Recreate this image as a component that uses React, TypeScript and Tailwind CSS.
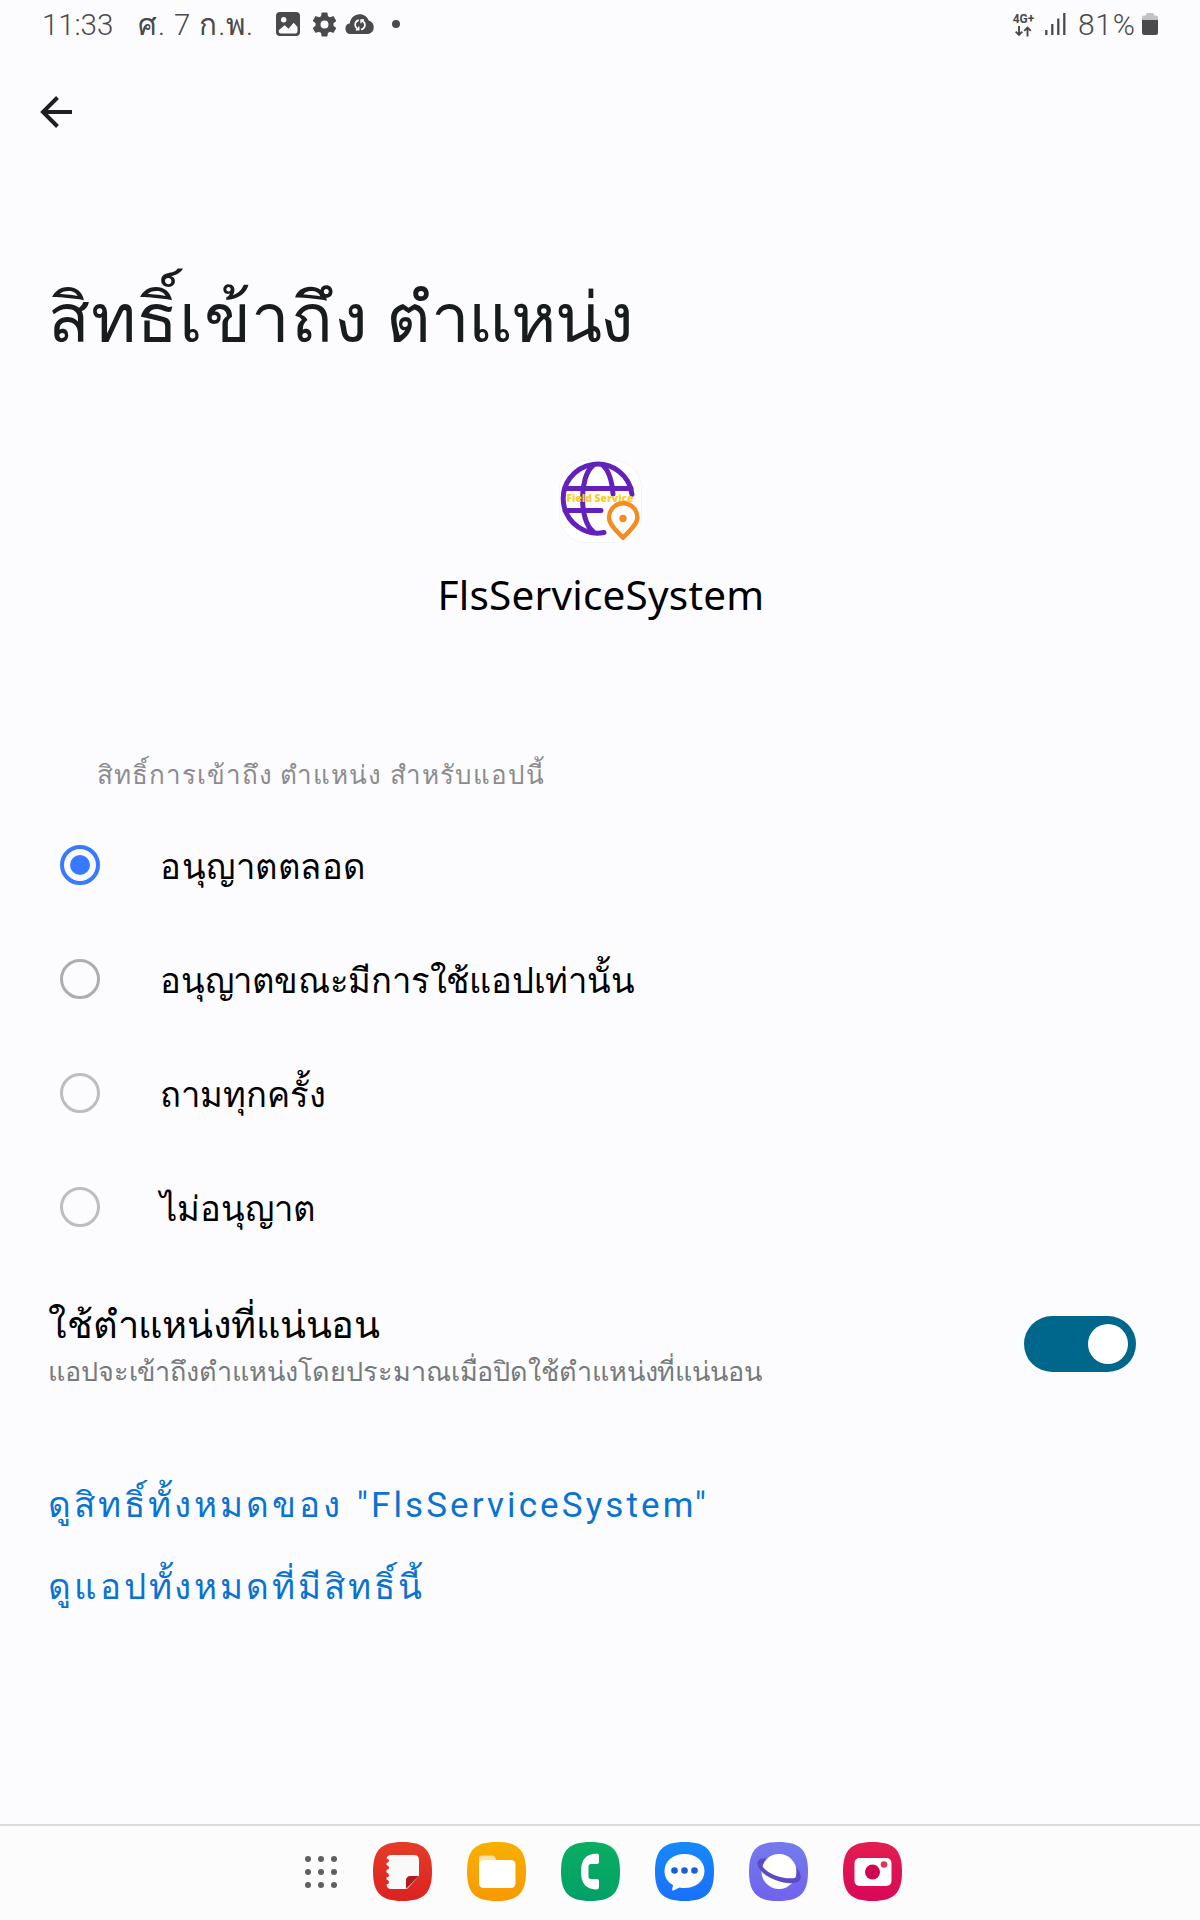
import type { ReactNode } from "react";

const options = [
  { label: "อนุญาตตลอด", ring: "border-[#387aff]", tracking: "tracking-[0.5px]", checked: true },
  { label: "อนุญาตขณะมีการใช้แอปเท่านั้น", ring: "border-[#adadb0]", tracking: "tracking-[-0.2px]", checked: false },
  { label: "ถามทุกครั้ง", ring: "border-[#bdbdc0]", tracking: "tracking-normal", checked: false },
  { label: "ไม่อนุญาต", ring: "border-[#bdbdc0]", tracking: "tracking-normal", checked: false },
];

function StatusBar() {
  return (
    <header className="flex h-[50px] shrink-0 items-center text-[#4a4a4c]">
      <span className="ml-[42px] w-24 whitespace-nowrap text-[29.5px] leading-[50px] font-[350] tracking-[-0.1px]">11:33</span>
      <span className="w-[138px] whitespace-nowrap text-[29.5px] leading-[50px] font-[350] tracking-[0.9px]">ศ. 7 ก.พ.</span>
      <svg className="-mt-0.5 h-6 w-6" viewBox="0 0 24 24">
        <rect width="24" height="24" rx="4" fill="#4a4a4c" />
        <circle cx="7.7" cy="7.7" r="2.7" fill="#fcfcfe" />
        <path d="M2.7 18.2 8.7 13.3l3.8 3.4 5.2-6 3.8 4.3v4.2q0 2.2-2.2 2.2H5Q2.7 21.4 2.7 19.2z" fill="#fcfcfe" />
      </svg>
      <svg className="-mt-0.5 ml-3 h-[25px] w-[25px]" viewBox="2 2 20 20">
        <path
          fill="#4a4a4c"
          d="M19.14 12.94c.04-.3.06-.61.06-.94 0-.32-.02-.64-.07-.94l2.03-1.58a.49.49 0 0 0 .12-.61l-1.92-3.32a.488.488 0 0 0-.59-.22l-2.39.96c-.5-.38-1.03-.7-1.62-.94l-.36-2.54a.484.484 0 0 0-.48-.41h-3.84c-.24 0-.43.17-.47.41l-.36 2.54c-.59.24-1.13.57-1.62.94l-2.39-.96c-.22-.08-.47 0-.59.22L2.74 8.87c-.12.21-.08.47.12.61l2.03 1.58c-.05.3-.09.63-.09.94s.02.64.07.94l-2.03 1.58a.49.49 0 0 0-.12.61l1.92 3.32c.12.22.37.29.59.22l2.39-.96c.5.38 1.03.7 1.62.94l.36 2.54c.05.24.24.41.48.41h3.84c.24 0 .44-.17.47-.41l.36-2.54c.59-.24 1.13-.56 1.62-.94l2.39.96c.22.08.47 0 .59-.22l1.92-3.32c.12-.22.07-.47-.12-.61zM12 15.2a3.2 3.2 0 1 1 0-6.4 3.2 3.2 0 0 1 0 6.4"
        />
      </svg>
      <svg className="-mt-0.5 ml-2 h-5 w-[30px]" viewBox="0 0 30 20">
        <path d="M5.5 20a5.4 5.4 0 0 1-.6-10.7C5.3 4.2 9.5.3 14.7.3c4.2 0 7.6 2.5 9 6.2A7 7 0 0 1 23.5 20z" fill="#4a4a4c" />
        <g fill="none" stroke="#fcfcfe" strokeWidth="1.7">
          <path d="M13.8 6.2a4.6 4.6 0 0 0-2 8l1.7 1.3M16 15.5a4.6 4.6 0 0 0 2-8.3l-1.5-1" />
          <path d="M13.8 12.5v3.3h-3M16 9.2V6h3" strokeWidth="1.4" />
        </g>
      </svg>
      <span className="-mt-0.5 ml-[17px] h-2 w-2 rounded-full bg-[#4a4a4c]" />
      <div className="ml-auto flex w-[25px] flex-col items-center">
        <span className="text-[12px] leading-[13px] font-bold whitespace-nowrap">4G+</span>
        <svg className="h-[11px] w-[17px]" viewBox="0 0 17 11">
          <path d="M4 0v9M.7 5.700 4 9l3.300-3.300M12.500 10.500V1.500M9.200 4.800l3.300-3.300 3.300 3.300" fill="none" stroke="#4a4a4c" strokeWidth="1.9" />
        </svg>
      </div>
      <svg className="-mt-0.5 ml-[9px] h-[22px] w-[21px]" viewBox="0 0 21 22">
        <path d="M1.3 17v5M7.3 11v11M13.3 5.5V22M19.3 0v22" stroke="#4a4a4c" strokeWidth="2.3" />
      </svg>
      <span className="ml-3 w-16 whitespace-nowrap text-[30px] leading-[50px] font-[350] tracking-[0.7px]">81%</span>
      <svg className="-mt-0.5 mr-[42px] h-[22px] w-4" viewBox="0 0 16 22">
        <path d="M4 2.5V1.5Q4 0 5.5 0h5Q12 0 12 1.5v1h2q2 0 2 2V7H0V4.5q0-2 2-2z" fill="#c2c2c4" />
        <path d="M0 7h16v12.5q0 2.5-2.5 2.5h-11Q0 22 0 19.5z" fill="#4a4a4c" />
      </svg>
    </header>
  );
}

function FieldServiceIcon() {
  return (
    <svg className="h-[83px] w-[83px]" viewBox="0 0 83 83">
      <rect x="0.5" y="0.5" width="82" height="82" rx="27" fill="#ffffff" stroke="#eef3f3" strokeWidth="0.8" />
      <g fill="none" stroke="#6420bd" strokeWidth="5" strokeLinecap="round">
        <path d="M73 34.5A34.5 34.5 0 1 0 45 72.5" />
        <path d="M6 28.5h66M6 50.5h36" />
        <path d="M34 5.5C20 17 20 60 34 71.5M44 5.5C50 11 53 21 54 34" />
      </g>
      <text x="7.5" y="41.7" fontFamily="'Open Sans', sans-serif" fontSize="10.7" fontWeight="800" fill="#fccb2c" textLength="67" lengthAdjust="spacingAndGlyphs">Field Service</text>
      <path d="M64 77.8C59 72 50 65 50 57.5a14.2 14.2 0 0 1 28.4 0C78.4 65 69 72 64 77.8z" fill="#fff" stroke="#f68b1f" strokeWidth="4.4" strokeLinejoin="round" />
      <circle cx="64" cy="58.5" r="3.7" fill="#f68b1f" />
    </svg>
  );
}

function Squircle({ id, from, to, children }: { id: string; from: string; to: string; children: ReactNode }) {
  return (
    <svg className="h-[59px] w-[59px] shrink-0" viewBox="0 0 59 59">
      <defs>
        <linearGradient id={id} x1="0" y1="0" x2="0" y2="1">
          <stop offset="0" stopColor={from} />
          <stop offset="1" stopColor={to} />
        </linearGradient>
      </defs>
      <path d="M29.5 0C51 0 59 8 59 29.5S51 59 29.5 59 0 51 0 29.5 8 0 29.5 0z" fill={`url(#${id})`} />
      {children}
    </svg>
  );
}

function Dock() {
  return (
    <nav className="mt-auto flex h-24 shrink-0 items-center border-t-2 border-[#dcdce0] bg-[#fcfcfd] pb-[3px] pl-[305px]">
      <div className="mr-9 grid grid-cols-3 gap-[7px]">
        {Array.from({ length: 9 }, (_, i) => (
          <span key={i} className="h-[6px] w-[6px] rounded-full bg-[#606062]" />
        ))}
      </div>
      <div className="flex gap-[35px]">
        <Squircle id="notes" from="#e53c26" to="#dc2222">
          <path d="M18 13h23q5 0 5 5v16L34 47H18q-4 0-4.500-4.500 2.500-.5 2.500-2.500t-2.500-2.500v-2Q16 35 16 33t-2.500-2.500v-2.500Q16 27.500 16 25.500T13.500 23v-2Q16 20.500 16 18.500q0-1.500-2.500-2Q14 13 18 13z" fill="#f9f9f9" />
          <path d="M46 34H37.500Q33 34 33 38.500V47z" fill="#b01b1d" />
        </Squircle>
        <Squircle id="files" from="#f7b000" to="#f89900">
          <path d="M12 26V16q0-2.5 2.5-2.5h11q2 0 2.7 2l1 3V26z" fill="#fde0a2" />
          <rect x="12" y="18" width="36.5" height="28" rx="4.5" fill="#fff" />
        </Squircle>
        <Squircle id="phone" from="#0bae62" to="#02a068">
          <path d="M35 11.7q3-.5 3 2.3v6q0 2-2 2h-6q-2.500 0-2.500 2.500v10q0 2.500 2.500 2.500h6q2 0 2 2v6q0 2.800-3 2.500C25 47 20 42 20 29.600S25 12 35 11.700z" fill="#fff" />
        </Squircle>
        <Squircle id="messages" from="#1689f8" to="#1a70fc">
          <path d="M29.500 12c11.500 0 20 7 20 17s-8.500 17-20 17q-3 0-5-.5l-6 3q-1.500.5-1.300-1l.8-4.500C12.500 40 9.500 35 9.500 29c0-10 8.500-17 20-17z" fill="#fff" />
          <g fill="#1c5fd0">
            <circle cx="19.5" cy="28.5" r="3.3" />
            <circle cx="29.5" cy="28.5" r="3.3" />
            <circle cx="39.5" cy="28.5" r="3.3" />
          </g>
        </Squircle>
        <Squircle id="internet" from="#747bec" to="#7062ec">
          <circle cx="30" cy="29.5" r="17.5" fill="#fff" />
          <path d="M17.5 16.2C6.5 16 6 23 13.5 30.5 22 38 35 42 45 41c8-1 9-8 2.5-15.5 0 3 .5 6-.5 10C38.500 38.500 20 33.500 13.500 24.500Q14 20 17.500 16.200z" fill="#5c4bc6" />
        </Squircle>
        <Squircle id="camera" from="#e21e4f" to="#da0858">
          <rect x="11.5" y="16" width="37" height="28" rx="5" fill="#fff" />
          <circle cx="29.5" cy="30" r="7.5" fill="#cf0453" />
          <circle cx="41" cy="22.5" r="3.3" fill="#e0355a" />
        </Squircle>
      </div>
    </nav>
  );
}

export default function App() {
  return (
    <div className="flex h-[1920px] w-[1200px] flex-col overflow-hidden bg-[#fcfcfe] font-['Roboto',sans-serif] text-black">
      <StatusBar />
      <div className="flex h-[124px] shrink-0 items-center pl-10">
        <svg className="h-8 w-8" viewBox="0 0 32 32" fill="none" stroke="#1f1f21" strokeWidth="4">
          <path d="M32 16H3M17.5 1.5 3 16l14.5 14.5" />
        </svg>
      </div>
      <h1 className="mt-[95px] pl-12 text-[69px] leading-[100px] whitespace-nowrap text-[#191c1e]">
        <span className="tracking-[0.7px]">สิทธิ์เข้าถึง</span> <span className="tracking-[-1.4px]">ตำแหน่ง</span>
      </h1>
      <div className="mt-[91px] flex flex-col items-center">
        <FieldServiceIcon />
        <p className="mt-[22px] pl-0.5 font-['Noto_Sans',sans-serif] text-[40.5px] leading-[60px] tracking-[0.2px]">FlsServiceSystem</p>
      </div>
      <p className="mt-[130px] pl-[97px] text-[26px] leading-10 tracking-[1px] whitespace-nowrap text-[#8c8c8e]">สิทธิ์การเข้าถึง ตำแหน่ง สำหรับแอปนี้</p>
      <ul className="mt-[13px]">
        {options.map((o) => (
          <li key={o.label} className="flex h-[114px] items-center pl-[60px]">
            <span className={`flex h-10 w-10 items-center justify-center rounded-full ${o.checked ? "border-4" : "border-3"} ${o.ring}`}>
              {o.checked && <span className="h-5 w-5 rounded-full bg-[#387aff]" />}
            </span>
            <span className={`ml-[60px] pt-1 text-[34.6px] leading-[50px] whitespace-nowrap ${o.tracking}`}>{o.label}</span>
          </li>
        ))}
      </ul>
      <section className="flex h-40 items-start justify-between pr-16 pl-12">
        <div className="mt-9 whitespace-nowrap">
          <p className="text-[38px] leading-[50px] tracking-[-0.25px]">ใช้ตำแหน่งที่แน่นอน</p>
          <p className="mt-0.5 text-[27px] leading-10 tracking-[-0.1px] text-[#757a7d]">แอปจะเข้าถึงตำแหน่งโดยประมาณเมื่อปิดใช้ตำแหน่งที่แน่นอน</p>
        </div>
        <span className="mt-[52px] flex h-14 w-28 items-center justify-end rounded-full bg-[#00678c] pr-2">
          <span className="h-10 w-10 rounded-full bg-white" />
        </span>
      </section>
      <div className="mt-[41px] flex flex-col pl-12 text-[35px] leading-[82px] tracking-[3px] whitespace-nowrap text-[#0a73d1]">
        <a>ดูสิทธิ์ทั้งหมดของ <span className="ml-0.5 tracking-[3.1px]">"FlsServiceSystem"</span></a>
        <a className="tracking-[2.9px]">ดูแอปทั้งหมดที่มีสิทธิ์นี้</a>
      </div>
      <Dock />
    </div>
  );
}
